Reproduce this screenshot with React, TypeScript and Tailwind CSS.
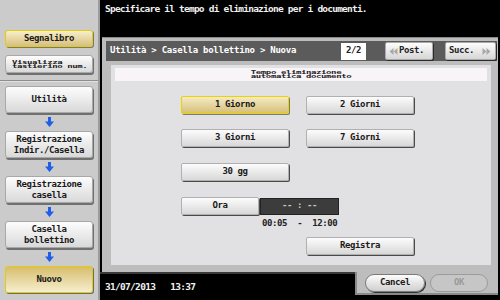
import React from "react";

const mono = "font-['DejaVu_Sans_Mono',monospace]";

function Arrow() {
  return (
    <div className="h-[18px] flex items-center justify-center">
      <svg width="9" height="10" viewBox="0 0 9 10">
        <path d="M3 0h3v4.5h3L4.5 10 0 4.5h3z" fill="#1f5fe8" />
      </svg>
    </div>
  );
}

function SideBtn({ children, yellow }: { children: React.ReactNode; yellow?: boolean }) {
  const base =
    "h-[27px] rounded-[3px] flex items-center justify-center text-center leading-[11px] text-[9px] tracking-[-0.4px] text-[#1a1a1a] font-bold " +
    mono;
  if (yellow) {
    return (
      <div
        className={
          base +
          " border border-[#e2cc10] bg-gradient-to-b from-[#d7bd6c] to-[#f6eecd] shadow-[1px_1px_0_#6b6b6b]"
        }
      >
        {children}
      </div>
    );
  }
  return (
    <div
      className={
        base +
        " border border-[#a8a8a8] bg-gradient-to-b from-[#fdfdfd] to-[#d9d9d9] shadow-[1px_2px_0_#707070]"
      }
    >
      {children}
    </div>
  );
}

function Btn({ children, yellow, w = "w-[108px]" }: { children: React.ReactNode; yellow?: boolean; w?: string }) {
  const base =
    w +
    " h-[18px] rounded-[2px] flex items-center justify-center text-[9px] tracking-[-0.4px] font-bold text-[#1a1a1a] " +
    mono;
  if (yellow) {
    return (
      <div className={base + " border border-[#ead400] bg-gradient-to-b from-[#f4eac4] to-[#d6bf78] shadow-[1px_1px_0_#7a7a7a]"}>
        {children}
      </div>
    );
  }
  return (
    <div className={base + " border border-[#b0b0b0] bg-gradient-to-b from-[#fcfcfc] to-[#d8d8d8] shadow-[1px_1px_0_#4a4a4a]"}>
      {children}
    </div>
  );
}

function Squash({ lines, className }: { lines: string[]; className?: string }) {
  return (
    <div className={"h-[9px] overflow-visible " + (className ?? "")}>
      <div className={"origin-top scale-y-50 text-[9px] leading-[9px] tracking-[-0.4px] font-bold whitespace-pre " + mono}>
        {lines.map((l, i) => (
          <div key={i}>{l}</div>
        ))}
      </div>
    </div>
  );
}

export default function App() {
  return (
    <div className={"w-[500px] h-[300px] flex bg-black overflow-hidden " + mono}>
      {/* Sidebar */}
      <div className="w-[100px] h-full bg-[#cbcbcb] border-r-2 border-[#9c9c9c] flex flex-col">
        <div className="pl-[5px] pr-[5px] pt-[30px] h-[80px] flex flex-col">
          <div className="w-[88px] h-[17px] rounded-[3px] border border-[#e2cc10] bg-gradient-to-b from-[#f6eecb] to-[#d8c07a] shadow-[1px_1px_0_#777] flex items-center justify-center text-[9px] tracking-[-0.4px] font-bold text-[#1a1a1a]">
            Segnalibro
          </div>
          <div className="w-[88px] h-[18px] mt-[8px] rounded-[3px] border border-[#a8a8a8] bg-gradient-to-b from-[#fdfdfd] to-[#d9d9d9] shadow-[1px_2px_0_#707070] flex items-center pl-[6px] text-[#1a1a1a]">
            <Squash lines={["Visualizza", "tastierino num."]} className="mt-[1px]" />
          </div>
        </div>
        <div className="h-[1px] bg-[#8e8e8e]" />
        <div className="h-[1px] bg-[#e2e2e2]" />
        <div className="pl-[5px] pr-[5px] pt-[4px] flex flex-col w-[98px]">
          <SideBtn>Utilità</SideBtn>
          <Arrow />
          <SideBtn>
            Registrazione
            <br />
            Indir./Casella
          </SideBtn>
          <Arrow />
          <SideBtn>
            Registrazione
            <br />
            casella
          </SideBtn>
          <Arrow />
          <SideBtn>
            Casella
            <br />
            bollettino
          </SideBtn>
          <Arrow />
          <SideBtn yellow>Nuovo</SideBtn>
        </div>
      </div>

      {/* Main */}
      <div className="flex-1 flex flex-col">
        <div className="h-[37px] pl-[5px] pt-[3px] text-[9.5px] leading-[12px] tracking-[-0.78px] text-[#f0f0f0] font-bold">
          Specificare il tempo di eliminazione per i documenti.
        </div>

        {/* Frame */}
        <div className="ml-[2px] mr-[2px] h-[235px] bg-[#bdbdbd] border-t border-[#8a8a8a] pt-[3px] pl-[4px] flex flex-col">
          {/* header */}
          <div className="h-[20px] mr-[1px] bg-[#5b5b5b] flex items-center">
            <div className="pl-[4px] text-[9px] tracking-[-0.25px] text-white font-bold">
              Utilità &gt; Casella bollettino &gt; Nuova
            </div>
            <div className="ml-auto w-[25px] h-[17px] bg-white flex items-center justify-center text-[9px] tracking-[-0.4px] text-[#222] font-bold">
              2/2
            </div>
            <div className="ml-[19px] w-[48px] h-[18px] rounded-[2px] border border-[#aaa] bg-gradient-to-b from-[#fdfdfd] to-[#d6d6d6] shadow-[1px_1px_0_#2a2a2a] flex items-center pl-[3px] gap-[1px] text-[9px] tracking-[-0.4px] font-bold text-[#222]">
              <svg width="9" height="7" viewBox="0 0 9 7">
                <path d="M4.5 0v7L0.5 3.5z M8.5 0v7L4.5 3.5z" fill="#a9a9a9" />
              </svg>
              Post.
            </div>
            <div className="ml-[12px] mr-[1px] w-[51px] h-[18px] rounded-[2px] border border-[#aaa] bg-gradient-to-b from-[#fdfdfd] to-[#d6d6d6] shadow-[1px_1px_0_#2a2a2a] flex items-center pl-[3px] text-[9px] tracking-[-0.4px] font-bold text-[#222]">
              Succ.
              <svg className="ml-[8px]" width="9" height="7" viewBox="0 0 9 7">
                <path d="M0.5 0v7l4-3.5z M4.5 0v7l4-3.5z" fill="#a9a9a9" />
              </svg>
            </div>
          </div>

          {/* inner panel */}
          <div className="mt-[4px] ml-[5px] mr-[7px] h-[200px] bg-[#e1e0e3] flex flex-col">
            <div className="mt-[3px] mx-[4px] h-[13px] bg-[#f8f4f8] flex justify-center pt-[2px] text-[#222]">
              <Squash lines={["Tempo eliminazione", "automatica documento"]} />
            </div>
            <div className="pl-[70px] flex flex-col">
              <div className="mt-[15px] flex gap-[17px]">
                <Btn yellow>1 Giorno</Btn>
                <Btn>2 Giorni</Btn>
              </div>
              <div className="mt-[15px] flex gap-[17px]">
                <Btn>3 Giorni</Btn>
                <Btn>7 Giorni</Btn>
              </div>
              <div className="mt-[16px] flex gap-[17px]">
                <Btn>30 gg</Btn>
              </div>
              <div className="mt-[16px] flex items-center">
                <Btn w="w-[78px]">Ora</Btn>
                <div className="ml-[1px] w-[79px] h-[17px] bg-[#3c3c3c] border border-[#222] flex items-center justify-center text-[9px] tracking-[-0.4px] text-[#c8c8c8] font-bold whitespace-pre">
                  -- : --
                </div>
              </div>
              <div className="mt-[3px] pl-[81px] h-[10px] leading-[10px] text-[9px] tracking-[-0.4px] font-bold text-[#222] whitespace-pre">
                00:05  -  12:00
              </div>
              <div className="mt-[9px] pl-[125px]">
                <Btn>Registra</Btn>
              </div>
            </div>
          </div>
        </div>

        {/* bottom row */}
        <div className="flex h-[28px]">
          <div className="flex-1 bg-black border-t-2 border-[#3a3a3a] pl-[5px] pt-[8px] text-[9.5px] leading-[10px] tracking-[-0.7px] text-[#f2f2f2] font-bold whitespace-pre">
            31/07/2013   13:37
          </div>
          <div className="w-[143px] mr-[2px] h-[23px] bg-[#bdbdbd] border-l-2 border-b-2 border-[#8a8a8a] pl-[8px] pt-[2px] flex gap-[5px]">
            <div className="w-[60px] h-[18px] rounded-full border border-[#7a7a7a] bg-gradient-to-b from-[#fdfdfd] to-[#cfcfcf] shadow-[1px_1px_0_#333] flex items-center justify-center text-[9px] tracking-[-0.4px] font-bold text-[#1a1a1a]">
              Cancel
            </div>
            <div className="w-[58px] h-[18px] rounded-full border border-[#9c9c9c] bg-[#c6c6c6] flex items-center justify-center text-[9px] tracking-[-0.4px] font-bold text-[#9a9a9a]">
              OK
            </div>
          </div>
        </div>
      </div>
    </div>
  );
}
